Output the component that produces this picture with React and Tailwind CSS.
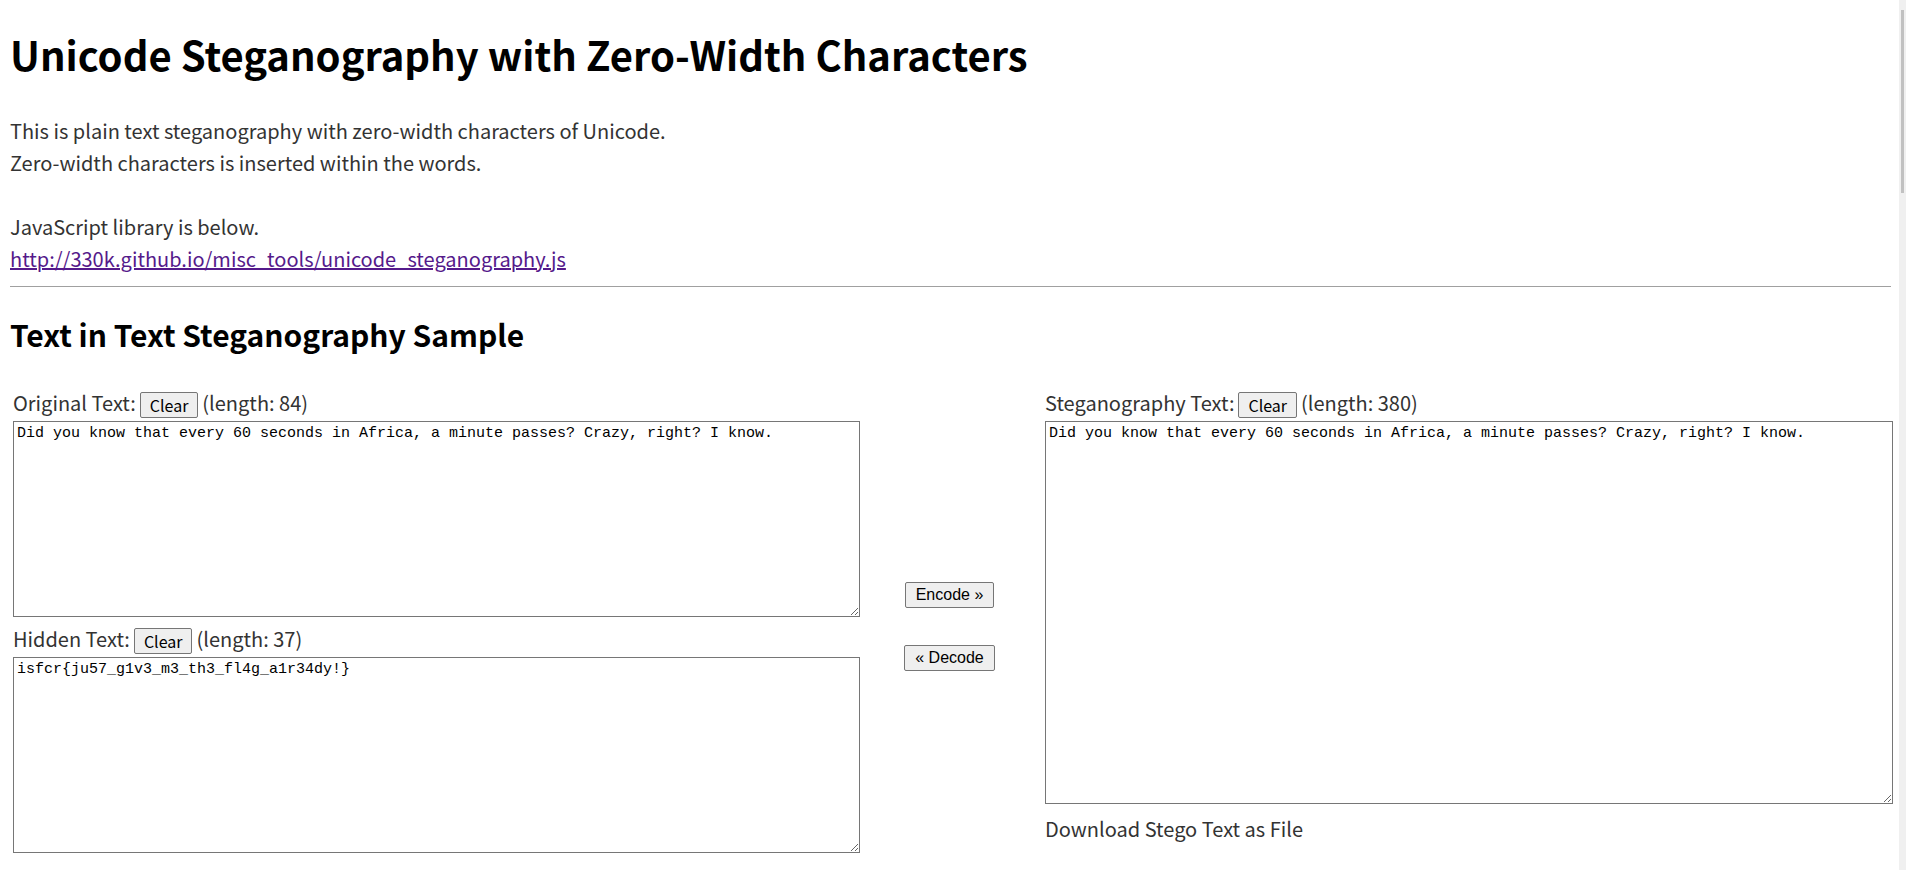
import { useState } from 'react'

const sample = "Did you know that every 60 seconds in Africa, a minute passes? Crazy, right? I know.";
const hidden = "isfcr{ju57_g1v3_m3_th3_fl4g_a1r34dy!}";

function ClearButton({ onClick }) {
  return (
    <button
      onClick={onClick}
      className="relative top-[1px] mx-[4px] h-[26px] px-[9px] align-baseline text-[16px] leading-[24px] text-black bg-[#efefef] border border-[#767676] rounded-[2px]"
    >
      Clear
    </button>
  );
}

function Field({ label, value, setValue, length, height }) {
  return (
    <div>
      <div className="h-[34px] leading-[32px] text-[20px] text-[#333]">
        {label}:
        <ClearButton onClick={() => setValue("")} />
        (length: {length})
      </div>
      <textarea
        value={value}
        onChange={(e) => setValue(e.target.value)}
        className={`block w-full ${height} p-[2px] pl-[3px] border border-[#767676] bg-white text-black text-[15px] leading-[19px] font-['Liberation_Mono',monospace]`}
      />
    </div>
  );
}

export default function App() {
  const [orig, setOrig] = useState(sample);
  const [hid, setHid] = useState(hidden);
  const [stego, setStego] = useState(sample);

  const stegoLength = stego === sample ? 380 : stego.length;

  return (
    <div className="flex h-screen overflow-hidden bg-white font-['Noto_Sans_CJK_JP',sans-serif]">
      <main className="flex-1 pl-[10px] pr-[8px]">
        <h1 className="pt-[30px] text-[40px] leading-[48px] font-bold text-black">
          Unicode Steganography with Zero-Width Characters
        </h1>
        <div className="mt-[37px] text-[20px] leading-[32px] text-[#333]">
          <p>This is plain text steganography with zero-width characters of Unicode.</p>
          <p>Zero-width characters is inserted within the words.</p>
          <p>&nbsp;</p>
          <p>JavaScript library is below.</p>
          <a href="#" className="underline text-[#551a8b]">
            http://330k.github.io/misc_tools/unicode_steganography.js
          </a>
        </div>
        <hr className="mt-[11px] border-0 border-t border-[#a0a0a0]" />
        <h2 className="mt-[27px] text-[30px] leading-[40px] font-bold text-black">
          Text in Text Steganography Sample
        </h2>
        <div className="mt-[33px] ml-[3px] mr-[-2px] grid grid-cols-[847px_1fr_848px]">
          <div className="flex flex-col gap-[6px]">
            <Field label="Original Text" value={orig} setValue={setOrig} length={orig.length} height="h-[196px]" />
            <Field label="Hidden Text" value={hid} setValue={setHid} length={hid.length} height="h-[196px]" />
          </div>
          <div className="flex flex-col items-center justify-center gap-[37px] pt-[12px] pr-[6px] font-['Liberation_Sans',sans-serif]">
            <button className="h-[26px] px-[10px] text-[16px] text-black bg-[#efefef] border border-[#767676] rounded-[2px]">
              Encode »
            </button>
            <button className="h-[26px] px-[10px] text-[16px] text-black bg-[#efefef] border border-[#767676] rounded-[2px]">
              « Decode
            </button>
          </div>
          <div>
            <Field label="Steganography Text" value={stego} setValue={setStego} length={stegoLength} height="h-[383px]" />
            <div className="mt-[9px] text-[20px] leading-[32px] text-[#333]">Download Stego Text as File</div>
          </div>
        </div>
      </main>
      <aside className="w-[7px] shrink-0 bg-[#f0f0f0] pt-[10px] px-[2px]">
        <div className="h-[183px] bg-[#c1c1c1]" />
      </aside>
    </div>
  );
}
